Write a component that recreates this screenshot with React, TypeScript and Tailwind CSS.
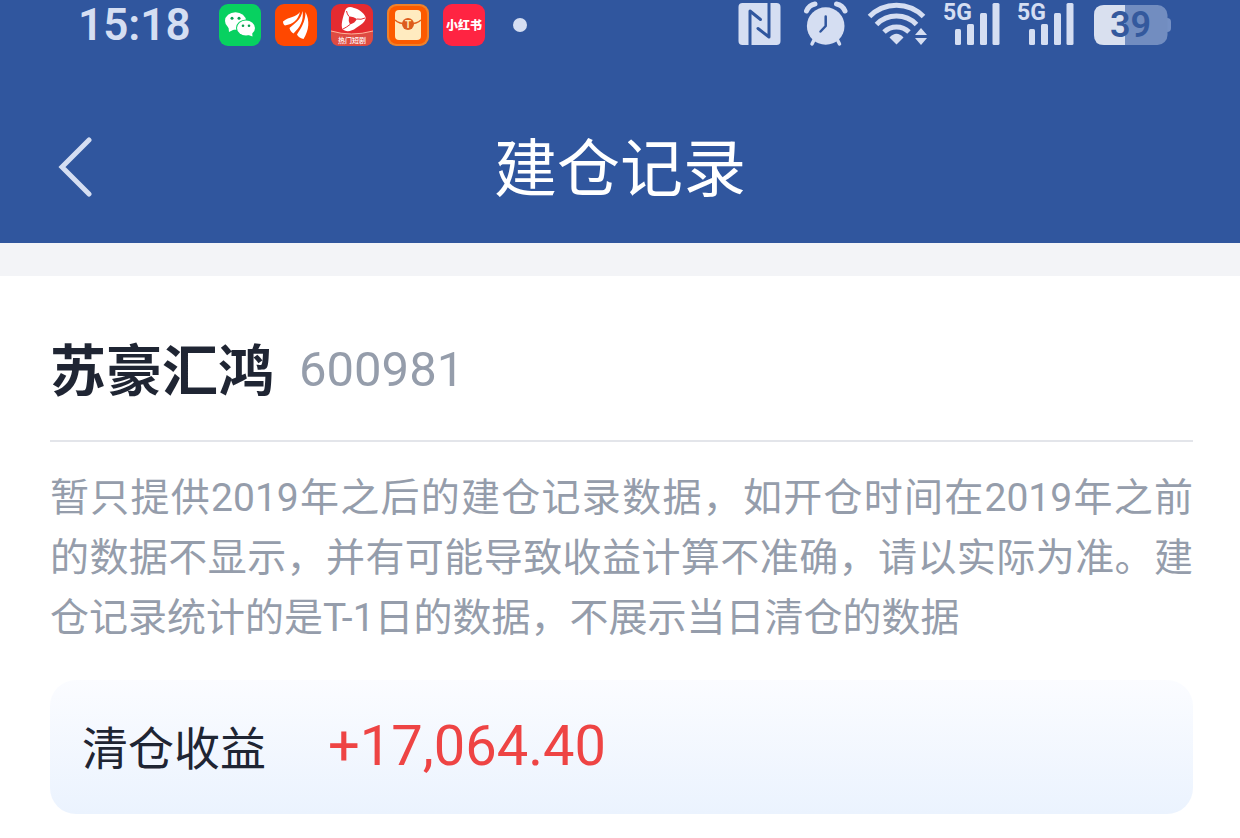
import React from 'react';

const note =
  '暂只提供2019年之后的建仓记录数据，如开仓时间在2019年之前的数据不显示，并有可能导致收益计算不准确，请以实际为准。建仓记录统计的是T-1日的数据，不展示当日清仓的数据';

const cjk = "font-['Roboto','Noto_Sans_CJK_SC',sans-serif]";

const WechatIcon = () => (
  <svg width="42" height="42" viewBox="0 0 42 42" aria-hidden="true">
    <rect width="42" height="42" rx="9" fill="#07d160" />
    <path d="M9.500 23 L10 28 L16 25 Z" fill="#fff" />
    <ellipse cx="16.500" cy="17" rx="10.500" ry="8.700" fill="#fff" />
    <ellipse cx="27" cy="24" rx="10" ry="8.600" fill="#07d160" />
    <ellipse cx="27" cy="24" rx="9" ry="7.600" fill="#fff" />
    <path d="M28 30.500 L33.500 32.500 L33 27 Z" fill="#fff" />
    <circle cx="13" cy="14.300" r="1.500" fill="#07a050" />
    <circle cx="20" cy="14.300" r="1.500" fill="#07a050" />
    <circle cx="24" cy="21.700" r="1.300" fill="#07a050" />
    <circle cx="30" cy="21.700" r="1.300" fill="#07a050" />
  </svg>
);

const WingIcon = () => (
  <svg width="42" height="42" viewBox="0 0 42 42" aria-hidden="true">
    <rect width="42" height="42" rx="9" fill="#ff4800" />
    <path d="M25 8 C20 14 15 12 8 17.500 C8 19 8.500 20.500 10 21.500 C18 20 23 16 25 8 Z" fill="#fff" />
    <path d="M27.500 7 C26 16 20 19 14.500 24 C15 26.500 16.500 28.500 18.500 29.500 C25 23 29 17 27.500 7 Z" fill="#fff" />
    <path d="M30.500 8 C30.500 18 26 24 22 30.500 C23 32.500 25 34 28.500 35 C34 26 35 17 30.500 8 Z" fill="#fff" />
  </svg>
);

const DramaIcon = () => (
  <svg width="42" height="42" viewBox="0 0 42 42" aria-hidden="true">
    <rect width="42" height="42" rx="9" fill="#e52b30" />
    <path d="M0 27 Q20 33 42 27 V33 Q42 42 33 42 H9 Q0 42 0 33 Z" fill="#de4b42" />
    <path d="M0 27 Q20 33 42 27" fill="none" stroke="#ffb59b" />
    <path
      d="M14 7 C15 3 19 2 23 4 C28 5 33 9 34.500 13 C35.500 17 30 21 25 24 C20 28 14 28 11.500 25 C9.500 21 12 13 14 7 Z"
      fill="#fff"
    />
    <path d="M18 12.500 Q22 12 26 15 Q24 19 19 20.500 Q17 17 18 12.500 Z" fill="#e52b30" />
    <path d="M18 12.500 Q16 10 15.500 7 M26 15 Q30 16 34 14 M19 20.500 Q16 23 12 25" fill="none" stroke="#e52b30" strokeWidth="1" />
    <text x="21" y="38.500" textAnchor="middle" fontSize="7" fontWeight="500" fill="#fff" fontFamily="Noto Sans CJK SC, sans-serif">
      热门短剧
    </text>
  </svg>
);

const EnvelopeIcon = () => (
  <svg width="42" height="42" viewBox="0 0 42 42" aria-hidden="true">
    <rect width="42" height="42" rx="9" fill="#f0812a" />
    <rect x="2" y="2" width="38" height="38" rx="8" fill="#fc5a00" />
    <rect x="8" y="6" width="26" height="30" rx="4" fill="#ffebc0" />
    <path d="M8 16 Q12 20 21 20 Q30 20 34 16" fill="none" stroke="#e2601c" strokeWidth="1.500" />
    <circle cx="21" cy="20" r="6" fill="#dd5c1c" />
    <text x="21" y="23.500" textAnchor="middle" fontSize="10" fontWeight="700" fill="#ffe8b0" fontFamily="Roboto, sans-serif">
      T
    </text>
  </svg>
);

const RedBookIcon = () => (
  <svg width="42" height="42" viewBox="0 0 42 42" aria-hidden="true">
    <rect width="42" height="42" rx="9" fill="#ff2442" />
    <text x="21" y="25.500" textAnchor="middle" fontSize="12" fontWeight="900" fill="#fff" fontFamily="Noto Sans CJK SC, sans-serif">
      小红书
    </text>
  </svg>
);

const NfcIcon = () => (
  <svg width="49" height="50" viewBox="0 0 49 50" aria-hidden="true">
    <rect x="0.500" y="3" width="42" height="42" rx="4" fill="#d5def2" />
    <path d="M12 46 V11 L22.500 19.500" fill="none" stroke="#30569e" strokeWidth="3" strokeLinecap="round" strokeLinejoin="round" />
    <path d="M31 2 V37 L20 28.500" fill="none" stroke="#30569e" strokeWidth="3" strokeLinecap="round" strokeLinejoin="round" />
  </svg>
);

const AlarmIcon = () => (
  <svg width="48" height="50" viewBox="0 0 48 50" aria-hidden="true">
    <circle cx="22.700" cy="26" r="18.800" fill="#d5def2" />
    <path d="M3.500 11 Q6 5 12 4" stroke="#d5def2" strokeWidth="5" strokeLinecap="round" fill="none" />
    <path d="M42 11 Q39.500 5 33.500 4" stroke="#d5def2" strokeWidth="5" strokeLinecap="round" fill="none" />
    <path d="M11 40 L9 44 M34.500 40 L36.500 44" stroke="#d5def2" strokeWidth="3.500" strokeLinecap="round" />
    <path d="M22.700 16.500 V26 L17.500 31.500" fill="none" stroke="#30569e" strokeWidth="2.500" strokeLinecap="round" strokeLinejoin="round" />
  </svg>
);

const WifiIcon = () => (
  <svg width="60" height="50" viewBox="0 0 60 50" aria-hidden="true">
    <g fill="none" stroke="#d5def2" strokeWidth="5">
      <path d="M2.500 16.500 A38 38 0 0 1 56.500 16.500" />
      <path d="M9.500 24.500 A28 28 0 0 1 49.500 24.500" />
      <path d="M17 32 A18 18 0 0 1 42 32" />
    </g>
    <path d="M22.500 37.500 Q29.500 30 36.500 37.500 L29.500 44.500 Z" fill="#d5def2" />
    <path d="M54 28 L60 35 H48 Z M48 38 H60 L54 45 Z" fill="#d5def2" />
  </svg>
);

const SignalIcon = () => (
  <svg width="58" height="50" viewBox="0 0 58 50" aria-hidden="true">
    <text x="0" y="20" fontSize="23" fontWeight="700" fill="#d5def2" fontFamily="Roboto, sans-serif">
      5G
    </text>
    <g fill="#d5def2">
      <rect x="12" y="29" width="6" height="16" rx="1.500" />
      <rect x="24" y="24" width="7" height="21" rx="1.500" />
      <rect x="37" y="13" width="7" height="32" rx="1.500" />
      <rect x="49.500" y="3" width="7" height="42" rx="1.500" />
    </g>
  </svg>
);

const BatteryIcon = () => (
  <svg width="80" height="50" viewBox="0 0 80 50" aria-hidden="true">
    <path d="M76 18 Q80 18 80 22 V28 Q80 32 76 32 Z" fill="#7590c4" />
    <rect x="3" y="5" width="73.500" height="40" rx="10" fill="#728dc0" />
    <path d="M13 5 H34 V45 H13 Q3 45 3 35 V15 Q3 5 13 5 Z" fill="#d9e0ef" />
    <text x="39.500" y="37" textAnchor="middle" fontSize="36" fontWeight="600" fill="#34599d" fontFamily="Roboto, sans-serif">
      39
    </text>
  </svg>
);

const StatusBar = () => (
  <div className="flex h-[50px] items-center justify-between pl-[78px] pr-[69px]">
    <div className="flex items-center">
      <span className="mr-7 text-[44px] leading-[50px] font-semibold text-[#d5def2]">15:18</span>
      <div className="flex items-center gap-3.5">
        <WechatIcon />
        <WingIcon />
        <DramaIcon />
        <EnvelopeIcon />
        <RedBookIcon />
      </div>
      <span className="ml-7 size-3.5 rounded-full bg-[#d5def2]"></span>
    </div>
    <div className="flex items-center gap-4">
      <NfcIcon />
      <AlarmIcon />
      <WifiIcon />
      <SignalIcon />
      <SignalIcon />
      <BatteryIcon />
    </div>
  </div>
);

const App = () => {
  return (
    <div className={`bg-white ${cjk}`}>
      <header className="bg-[#30569e] pb-[26px]">
        <StatusBar />
        <div className="mt-[69px] grid grid-cols-[1fr_auto_1fr] items-center">
          <button type="button" aria-label="返回" className="ml-[58px] w-9 cursor-pointer">
            <svg width="36" height="62" viewBox="0 0 36 62" fill="none" aria-hidden="true">
              <path d="M31 3 L4 30 L31 57" stroke="#d5def2" strokeWidth="5" strokeLinecap="round" />
            </svg>
          </button>
          <h1 className="pt-1 text-[63px] leading-[94px] text-white">建仓记录</h1>
        </div>
      </header>
      <div className="h-[33px] bg-[#f3f4f7]"></div>

      <main className="pl-[50px] pr-[47px]">
        <div className="flex items-start gap-[25px] border-b-2 border-[#e3e5ea] pt-[54px] pb-[26px]">
          <h2 className="text-[56px] leading-[84px] font-bold text-[#1f2533]">苏豪汇鸿</h2>
          <span className="text-[49px] leading-[80px] text-[#959dab]">600981</span>
        </div>

        <p className="pt-[26px] text-justify text-[39px] leading-[60px] text-[#959dab]">{note}</p>

        <div className="mt-8 flex items-start gap-[62px] rounded-[26px] bg-linear-to-b from-[#fbfcff] to-[#ebf3fe] px-8 pt-[25px] pb-[21px]">
          <span className="text-[46px] leading-[88px] text-[#1f2533]">清仓收益</span>
          <span className="text-[56px] leading-[82px] text-[#ee4444]">+17,064.40</span>
        </div>
      </main>
    </div>
  );
};

export default App;
